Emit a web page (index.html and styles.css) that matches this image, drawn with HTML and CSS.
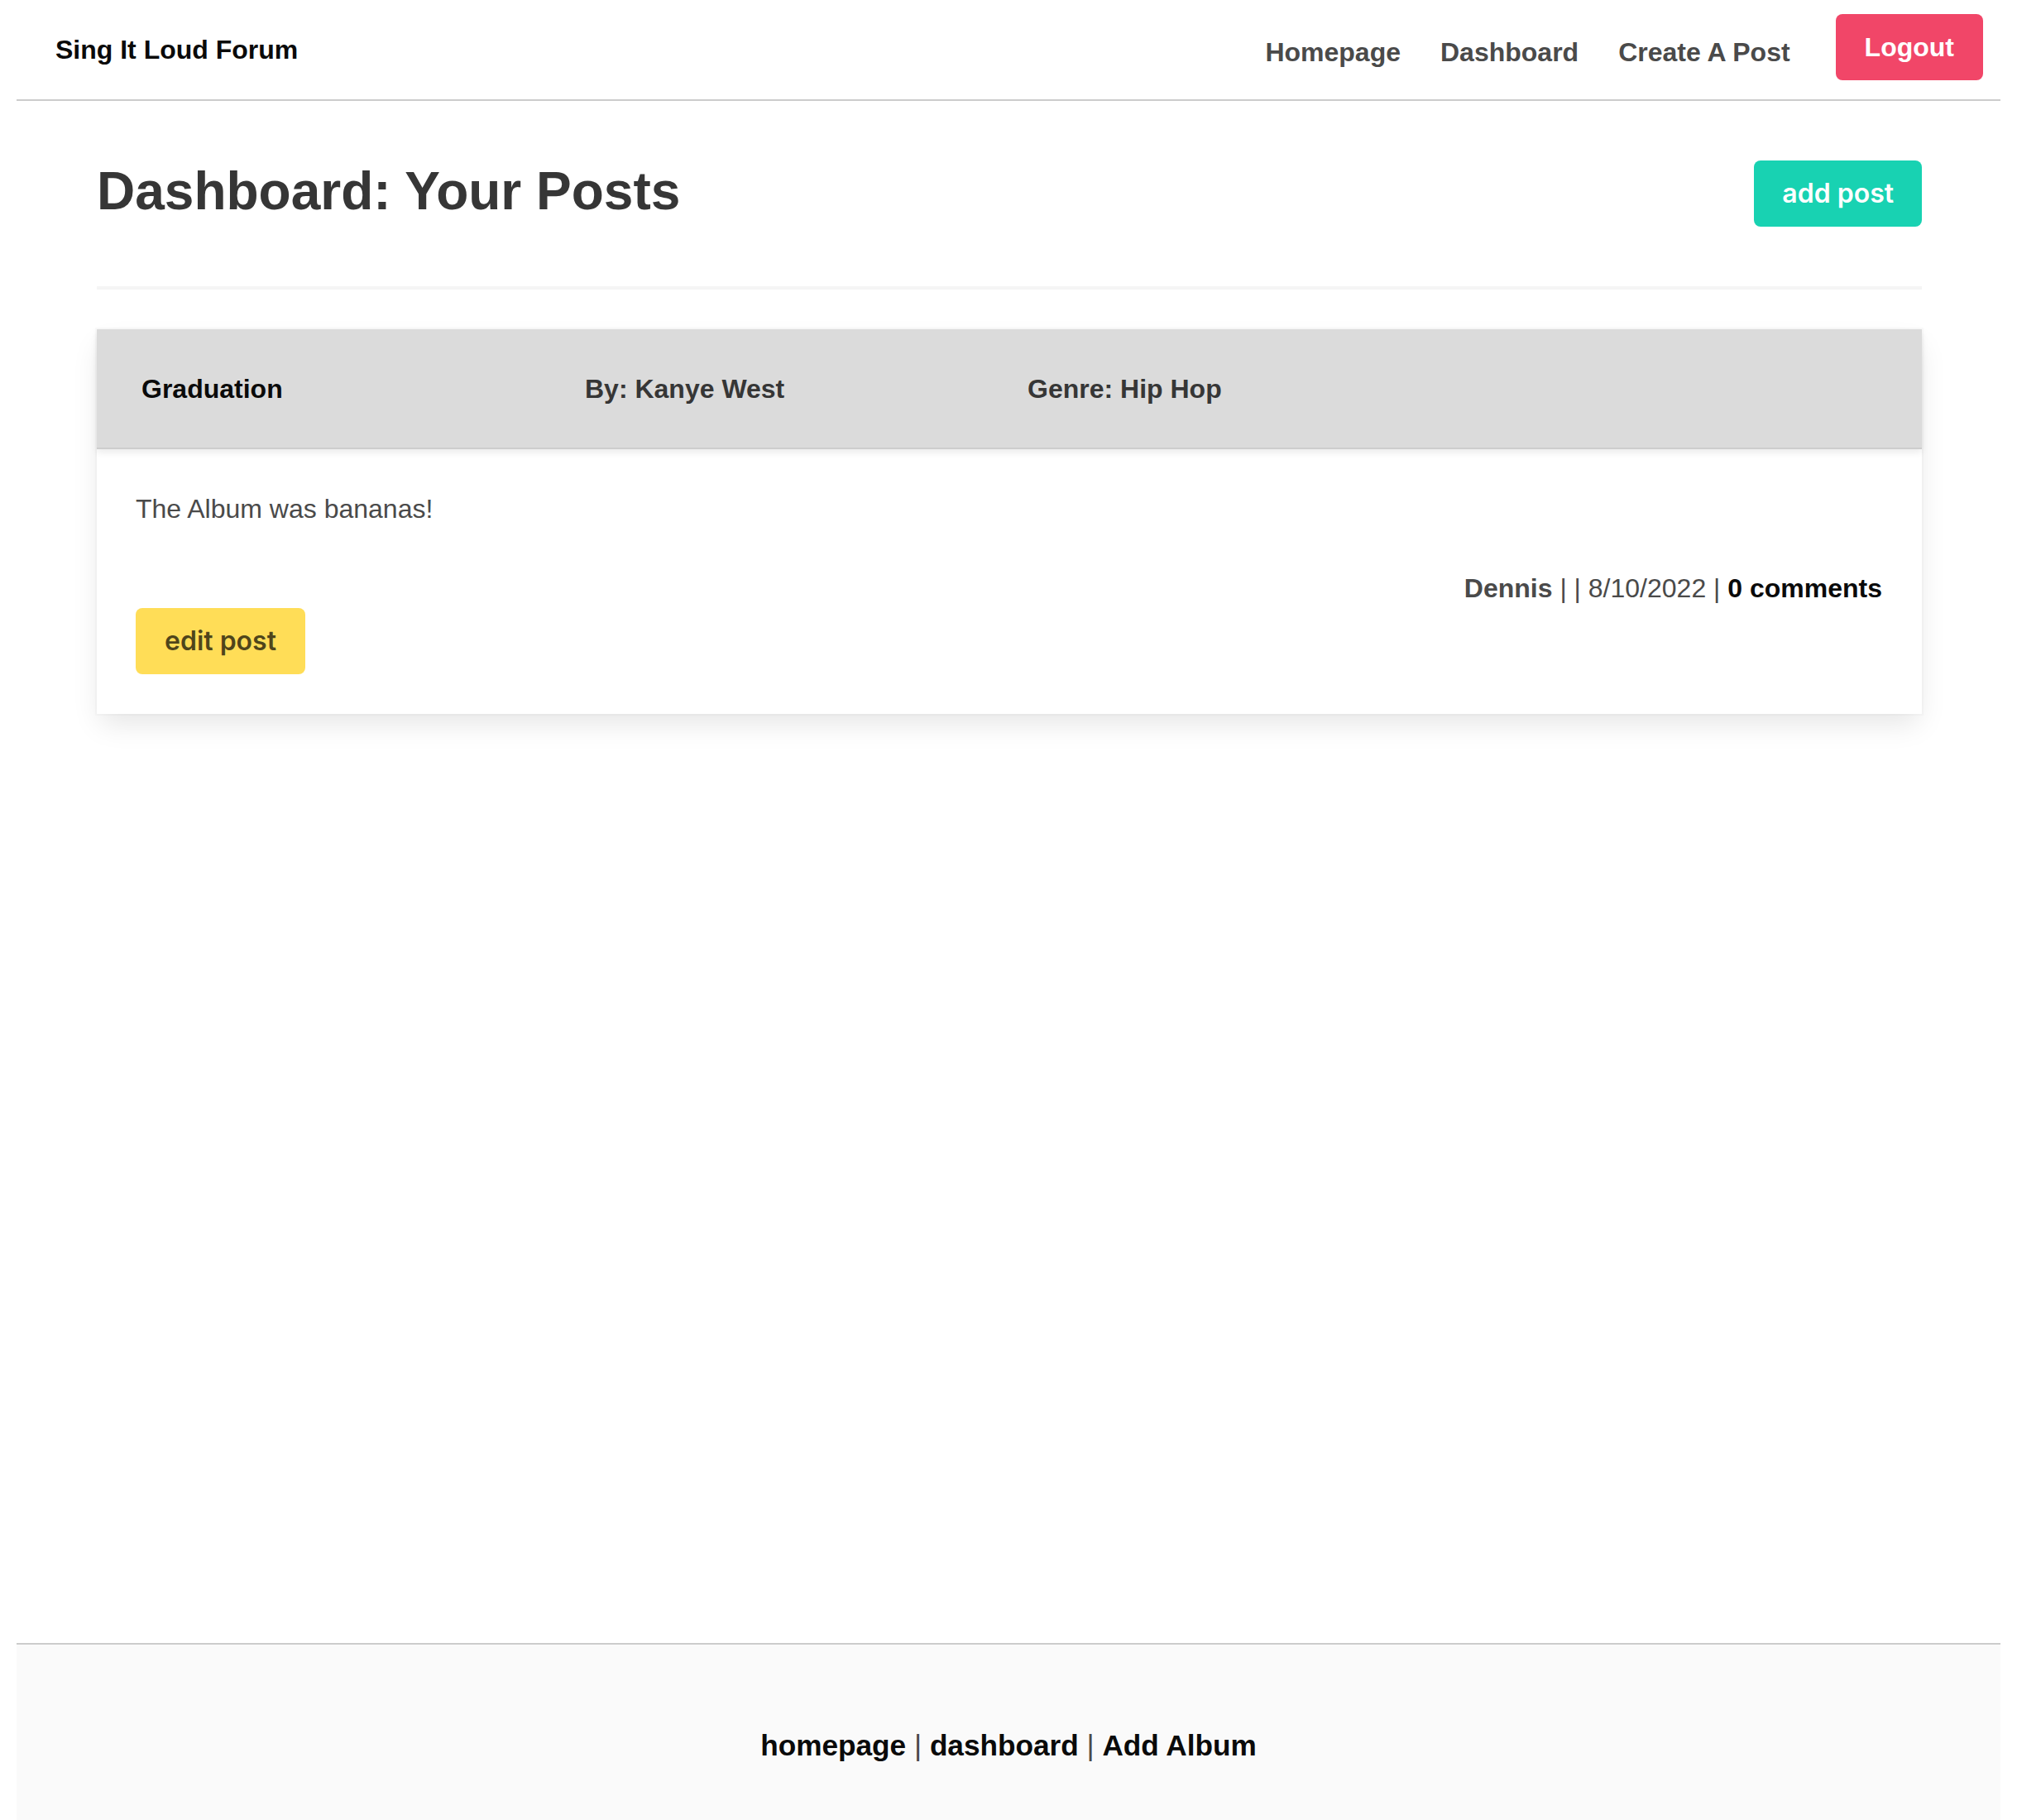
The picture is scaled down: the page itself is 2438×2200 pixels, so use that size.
FILE: index.html
```html
<!DOCTYPE html>
<html lang="en">
<head>
<meta charset="utf-8">
<title>Sing It Loud Forum</title>
<link rel="stylesheet" href="styles.css">
</head>
<body>
<header class="navbar">
  <a class="brand" href="#">Sing It Loud Forum</a>
  <nav class="nav-menu">
    <a class="nav-link" href="#">Homepage</a>
    <a class="nav-link" href="#">Dashboard</a>
    <a class="nav-link" href="#">Create A Post</a>
    <a class="btn btn-danger" href="#">Logout</a>
  </nav>
</header>

<main class="main">
  <section class="dash">
    <div class="dash-head">
      <h1 class="title">Dashboard: Your Posts</h1>
      <a class="btn btn-inter btn-primary" href="#">add post</a>
    </div>
    <hr class="divider">

    <article class="card">
      <div class="card-header">
        <p class="card-title">Graduation</p>
        <p class="card-sub">By: Kanye West</p>
        <p class="card-sub">Genre: Hip Hop</p>
      </div>
      <div class="card-content">
        <p class="post-body">The Album was bananas!</p>
        <p class="post-meta"><strong class="meta-user">Dennis</strong> | | 8/10/2022 | <a class="meta-comments" href="#">0 comments</a></p>
        <a class="btn btn-inter btn-warning" href="#">edit post</a>
      </div>
    </article>
  </section>
</main>

<footer class="footer">
  <p class="footer-links"><a href="#">homepage</a> | <a href="#">dashboard</a> | <a href="#">Add Album</a></p>
</footer>
</body>
</html>
```

FILE: styles.css
```css
* {
  box-sizing: border-box;
}

html {
  background: #ffffff;
}

body {
  margin: 0 20px;
  font-family: "Liberation Sans", Arial, Helvetica, sans-serif;
  font-size: 32px;
  line-height: 1.5;
  color: #4a4a4a;
}

a {
  text-decoration: none;
}

/* ---------- navbar ---------- */
.navbar {
  height: 122px;
  display: flex;
  align-items: center;
  justify-content: space-between;
  border-bottom: 2px solid #cccccc;
}

.brand {
  margin-left: 47px;
  font-weight: 700;
  color: #0a0a0a;
  line-height: 48px;
}

.nav-menu {
  display: flex;
  align-items: center;
  margin-right: 21px;
}

.nav-link {
  font-weight: 700;
  color: #4a4a4a;
  line-height: 48px;
  margin-right: 48px;
  margin-top: 6px;
}

.nav-link:nth-child(3) {
  margin-right: 55px;
}

/* ---------- buttons ---------- */
.btn {
  display: inline-flex;
  align-items: center;
  justify-content: center;
  height: 80px;
  padding: 0 34px;
  border-radius: 8px;
  font-weight: 700;
  font-size: 32px;
  line-height: 1;
}

.btn-danger {
  background: #f14668;
  color: #ffffff;
  padding: 0 35px;
  margin-bottom: 6px;
}

.btn-inter {
  font-family: Inter, "Liberation Sans", sans-serif;
  font-weight: 600;
}

.btn-primary {
  background: #18d2b2;
  color: #ffffff;
}

.btn-warning {
  background: #ffdd57;
  color: rgba(0, 0, 0, 0.7);
  padding: 0 35px;
}

/* ---------- main ---------- */
.main {
  min-height: 1864px;
  padding: 0 95px 0 97px;
}

.dash {
  padding-top: 72px;
}

.dash-head {
  display: flex;
  align-items: center;
  justify-content: space-between;
  height: 80px;
}

.title {
  margin: 0 0 6px;
  font-size: 64px;
  line-height: 72px;
  font-weight: 700;
  color: #363636;
}

.divider {
  border: none;
  height: 4px;
  background: #f5f5f5;
  margin: 72px 0 48px;
}

/* ---------- card ---------- */
.card {
  background: #ffffff;
  box-shadow: 0 16px 32px -4px rgba(10, 10, 10, 0.1), 0 0 0 2px rgba(10, 10, 10, 0.02);
}

.card-header {
  display: grid;
  grid-template-columns: 536px 535px auto;
  align-items: center;
  height: 145px;
  padding-left: 54px;
  background: #dbdbdb;
  border-bottom: 2px solid #cdcdcd;
  box-shadow: 0 4px 8px rgba(10, 10, 10, 0.08);
}

.card-title,
.card-sub {
  margin: 0;
  font-weight: 700;
  line-height: 48px;
}

.card-title {
  color: #0a0a0a;
}

.card-sub {
  color: #363636;
}

.card-content {
  padding: 48px 48px 48px 47px;
}

.post-body {
  margin: 0 0 48px;
  line-height: 48px;
  color: #4a4a4a;
}

.post-meta {
  margin: 0;
  line-height: 48px;
  text-align: right;
  color: #4a4a4a;
}

.meta-user {
  font-weight: 700;
  color: #4a4a4a;
}

.meta-comments {
  font-weight: 700;
  color: #0a0a0a;
}

/* ---------- footer ---------- */
.footer {
  background: #fafafa;
  border-top: 2px solid #cccccc;
  padding: 96px 48px 192px;
}

.footer-links {
  margin: 0;
  text-align: center;
  font-size: 35.2px;
  line-height: 52px;
  color: #4a4a4a;
}

.footer-links a {
  font-weight: 700;
  color: #0a0a0a;
}
```
